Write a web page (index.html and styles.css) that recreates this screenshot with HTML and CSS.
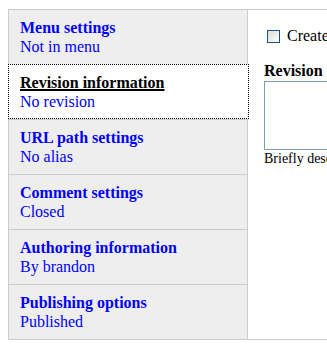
FILE: index.html
```html
<!DOCTYPE html>
<html lang="en">
<head>
  <meta charset="UTF-8">
  <meta name="viewport" content="width=device-width, initial-scale=1.0">
  <title>Node settings</title>
  <link rel="stylesheet" href="styles.css">
</head>
<body>
  <!-- Vertical tabs: tab list on the left, active pane on the right -->
  <div class="vertical-tabs">
    <ul class="tab-list">
      <li class="tab"><a href="#"><strong class="tab-title">Menu settings</strong><span class="tab-summary">Not in menu</span></a></li>
      <li class="tab selected"><a href="#"><strong class="tab-title">Revision information</strong><span class="tab-summary">No revision</span></a></li>
      <li class="tab"><a href="#"><strong class="tab-title">URL path settings</strong><span class="tab-summary">No alias</span></a></li>
      <li class="tab"><a href="#"><strong class="tab-title">Comment settings</strong><span class="tab-summary">Closed</span></a></li>
      <li class="tab"><a href="#"><strong class="tab-title">Authoring information</strong><span class="tab-summary">By brandon</span></a></li>
      <li class="tab"><a href="#"><strong class="tab-title">Publishing options</strong><span class="tab-summary">Published</span></a></li>
    </ul>

    <!-- Revision information pane -->
    <div class="pane">
      <div class="form-checkbox">
        <input type="checkbox" id="revision">
        <label for="revision">Create new revision</label>
      </div>
      <div class="form-textarea">
        <label for="log">Revision log message</label>
        <textarea id="log"></textarea>
        <div class="description">Briefly describe the changes you have made.</div>
      </div>
    </div>
  </div>
</body>
</html>
```

FILE: styles.css
```css
/* Base */
html, body { overflow: hidden; }
body {
  margin: 9px 0 0 8px;
  font-family: "Liberation Serif", "Times New Roman", serif;
  font-size: 16px;
  color: #000;
  background: #fff;
}
a { text-decoration: none; color: inherit; }

/* Vertical tabs wrapper */
.vertical-tabs {
  display: flex;
  border: 1px solid #ccc;
  border-right: none;
}

/* Tab list */
.tab-list {
  list-style: none;
  margin: 0;
  padding: 0;
  width: 238px;
  flex-shrink: 0;
  background: #eee;
  border-right: 1px solid #ccc;
}
.tab {
  border-top: 1px solid #ccc;
  padding: 8px 11px;
}
.tab:first-child { border-top: none; }
.tab a { display: block; color: #00f; }
.tab-title { display: block; font-weight: bold; line-height: 19px; white-space: nowrap; }
.tab-summary { display: block; line-height: 19px; white-space: nowrap; }

.tab.selected {
  position: relative;
  background: #fff;
  border: 1px dotted #000;
  margin: 0 -2px 0 -1px;
  padding: 8px 11px 7px;
}
.tab.selected + .tab { border-top: 1px solid #ccc; }
.tab.selected .tab-title {
  color: #000;
  text-decoration: underline;
  text-decoration-thickness: 2px;
  text-underline-offset: 1px;
}

/* Pane */
.pane {
  flex: 1;
  min-width: 0;
  overflow: hidden;
  padding: 16px 0 0 16px;
}
.form-checkbox {
  display: flex;
  align-items: center;
  line-height: 19px;
  white-space: nowrap;
}
.form-checkbox input {
  appearance: none;
  -webkit-appearance: none;
  width: 13px;
  height: 13px;
  margin: 1px 7px 0 3px;
  flex-shrink: 0;
  border: 1px solid #1c5180;
  background: linear-gradient(135deg, #dcdcd7 0%, #f4f4f2 70%, #fff 100%);
}
.form-textarea { margin-top: 16px; }
.form-textarea label {
  display: block;
  font-weight: bold;
  line-height: 19px;
  white-space: nowrap;
}
.form-textarea textarea {
  display: block;
  box-sizing: border-box;
  width: 420px;
  height: 69px;
  margin: 1px 0 0;
  border: 1px solid #7f9db9;
  background: #fff;
  resize: none;
}
.description {
  font-size: 14px;
  line-height: 17px;
  white-space: nowrap;
}
```
